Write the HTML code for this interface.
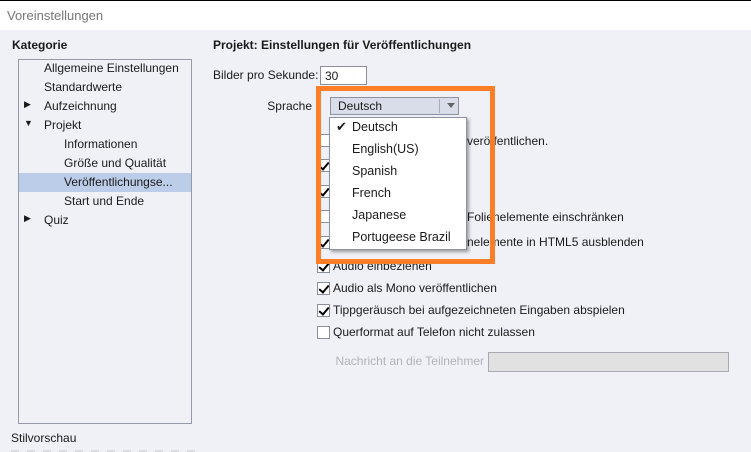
<!DOCTYPE html>
<html><head><meta charset="utf-8"><style>
*{margin:0;padding:0;box-sizing:border-box}
body{width:751px;height:452px;overflow:hidden;background:#eff1f6;font-family:"Liberation Sans","DejaVu Sans",sans-serif;font-size:12px;color:#1a1a1a;position:relative}
.a{position:absolute;white-space:nowrap}
.title{left:0;top:0;width:751px;height:30px;background:#fff;border-top:1px solid #000}
.cb{position:absolute;width:13px;height:13px;border:1px solid #8a8f9c;background:#fff;left:317px}
.cb.c::after{content:"";position:absolute;left:3px;top:0px;width:4px;height:8px;border:solid #000;border-width:0 2px 2px 0;transform:rotate(40deg)}
.lbl{left:333px}
.r{text-align:right}
.dd{left:352px;font-size:12.5px}
</style></head><body>
<div class="a title"><span class="a" style="left:7px;top:7px;color:#777;font-size:13px">Voreinstellungen</span></div>
<div class="a" style="left:12px;top:38px;font-weight:bold">Kategorie</div>
<div class="a" style="left:18px;top:59px;width:174px;height:365px;border:1px solid #9599a8"></div>
<div class="a" style="left:19px;top:173px;width:172px;height:19px;background:#bccde9"></div>
<div class="a" style="left:44px;top:61px">Allgemeine Einstellungen</div>
<div class="a" style="left:44px;top:80px">Standardwerte</div>
<div class="a" style="left:24px;top:99px;font-size:9px">▶</div>
<div class="a" style="left:44px;top:99px">Aufzeichnung</div>
<div class="a" style="left:24px;top:118px;font-size:9px">▼</div>
<div class="a" style="left:44px;top:118px">Projekt</div>
<div class="a" style="left:64px;top:137px">Informationen</div>
<div class="a" style="left:64px;top:156px">Größe und Qualität</div>
<div class="a" style="left:64px;top:175px">Veröffentlichungse...</div>
<div class="a" style="left:64px;top:194px">Start und Ende</div>
<div class="a" style="left:24px;top:213px;font-size:9px">▶</div>
<div class="a" style="left:44px;top:213px">Quiz</div>
<div class="a" style="left:11px;top:431px">Stilvorschau</div>
<div class="a" style="left:11px;top:450px;width:190px;height:2px;background:repeating-linear-gradient(90deg,#dcdde2 0 8px,#eff1f6 8px 16px)"></div>

<div class="a" style="left:213px;top:38px;font-weight:bold">Projekt: Einstellungen für Veröffentlichungen</div>
<div class="a" style="left:213px;top:68px">Bilder pro Sekunde:</div>
<div class="a" style="left:320px;top:66px;width:47px;height:19px;border:1px solid #8a8f9c;background:#fff;padding:2px 4px">30</div>
<div class="a r" style="left:212px;width:100px;top:99px">Sprache</div>
<div class="a" style="left:330px;top:97px;width:129px;height:18px;border:1px solid #8d92a2;background:#d9dde9;padding:1px 7px">Deutsch</div>
<div class="a" style="left:439px;top:99px;width:1px;height:14px;background:#aab"></div>
<div class="a" style="left:447px;top:103px;width:0;height:0;border-left:4px solid transparent;border-right:4px solid transparent;border-top:5px solid #666"></div>

<div class="cb" style="top:134px"></div><div class="a" style="left:467px;top:134px">veröffentlichen.</div>
<div class="cb c" style="top:159px"></div>
<div class="cb c" style="top:185px"></div>
<div class="cb" style="top:210px"></div><div class="a" style="left:467px;top:210px">Folienelemente einschränken</div>
<div class="cb c" style="top:236px"></div><div class="a" style="left:467px;top:235px">nelemente in HTML5 ausblenden</div>
<div class="cb c" style="top:260px"></div><div class="a lbl" style="top:259px">Audio einbeziehen</div>
<div class="cb c" style="top:282px"></div><div class="a lbl" style="top:281px">Audio als Mono veröffentlichen</div>
<div class="cb c" style="top:304px"></div><div class="a lbl" style="top:303px">Tippgeräusch bei aufgezeichneten Eingaben abspielen</div>
<div class="cb" style="top:326px"></div><div class="a lbl" style="top:325px">Querformat auf Telefon nicht zulassen</div>
<div class="a r" style="left:284px;width:200px;top:354px;color:#b0b3bb">Nachricht an die Teilnehmer</div>
<div class="a" style="left:488px;top:352px;width:241px;height:20px;border:1px solid #a9abb0;background:#e1e1e1"></div>

<div class="a" style="left:329px;top:117px;width:138px;height:133px;background:#fff;border:1px solid #8d92a2;box-shadow:2px 2px 3px rgba(0,0,0,.35)"></div>
<div class="a" style="left:336px;top:119px;font-size:13px">✔</div>
<div class="a dd" style="top:120px">Deutsch</div>
<div class="a dd" style="top:142px">English(US)</div>
<div class="a dd" style="top:164px">Spanish</div>
<div class="a dd" style="top:186px">French</div>
<div class="a dd" style="top:208px">Japanese</div>
<div class="a dd" style="top:230px">Portugeese Brazil</div>

<div class="a" style="left:316px;top:86px;width:179px;height:178px;border:5px solid #fd7e26"></div>
</body></html>
